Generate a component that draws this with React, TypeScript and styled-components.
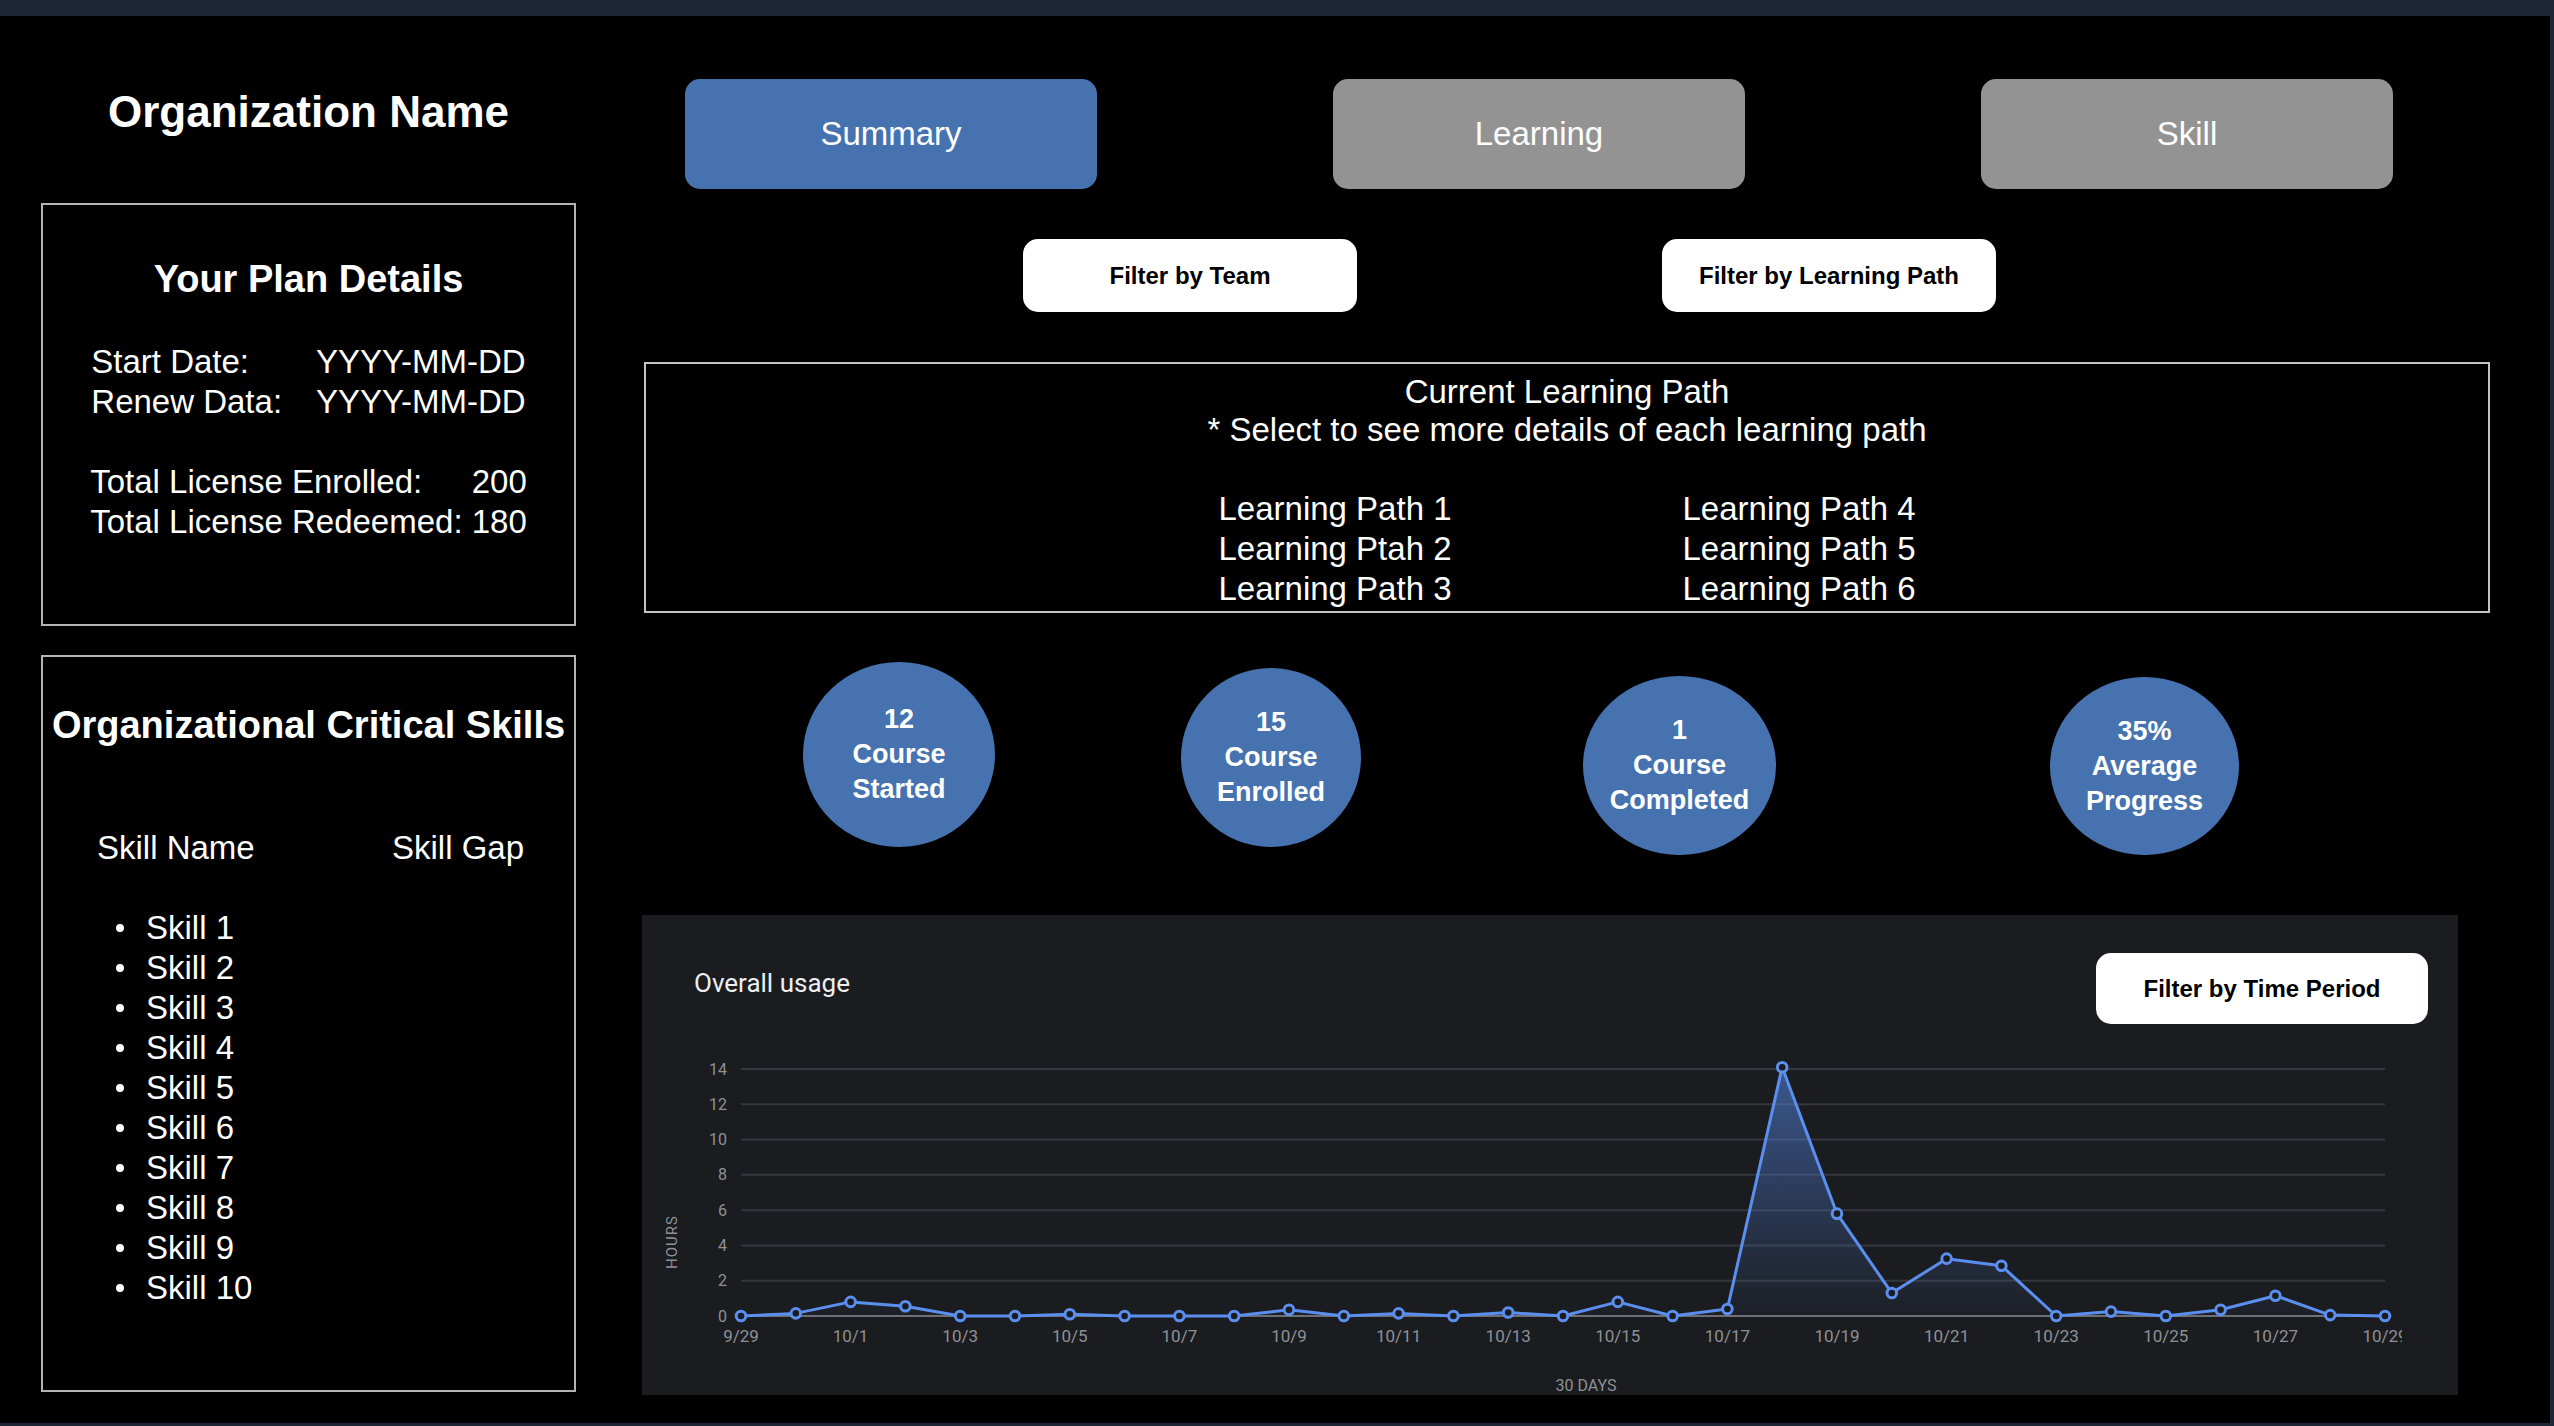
import React from "react";
import styled, { createGlobalStyle } from "styled-components";

const GlobalStyle = createGlobalStyle`
  html, body {
    margin: 0;
    padding: 0;
    background: #1e2638;
  }
  * { box-sizing: border-box; }
`;

const Frame = styled.div`
  margin: 16px 4px 0 0;
  height: 1407px;
  background: #000;
  display: flex;
  font-family: "Liberation Sans", Arial, Helvetica, sans-serif;
  color: #fff;
  overflow: hidden;
`;

const Sidebar = styled.aside`
  flex: none;
  width: 576px;
  padding-left: 41px;
  display: flex;
  flex-direction: column;
`;

const OrgTitle = styled.h1`
  margin: 71px 0 0;
  font-size: 44px;
  line-height: 50px;
  font-weight: 700;
  text-align: center;
`;

const Card = styled.section<{ $height: number; $top: number; $pad: number }>`
  margin-top: ${(p) => p.$top}px;
  height: ${(p) => p.$height}px;
  border: 2px solid #b4b4b4;
  padding-top: ${(p) => p.$pad}px;
  display: flex;
  flex-direction: column;
`;

const CardTitle = styled.h2`
  margin: 0;
  font-size: 38px;
  line-height: 44px;
  font-weight: 700;
  text-align: center;
  white-space: nowrap;
`;

const DateGrid = styled.div`
  margin: 41px auto 0;
  display: grid;
  grid-template-columns: auto auto;
  column-gap: 34px;
  font-size: 33px;
  line-height: 40px;
`;

const LicenseBlock = styled.div`
  margin: 40px auto 0;
  width: max-content;
  font-size: 33px;
  line-height: 40px;
`;

const LicenseRow = styled.div`
  display: flex;
  justify-content: space-between;
  gap: 9px;
`;

const SkillHead = styled.div`
  margin-top: 81px;
  padding-left: 54px;
  display: grid;
  grid-template-columns: 295px auto;
  font-size: 33px;
  line-height: 40px;
`;

const SkillList = styled.ul`
  list-style: none;
  margin: 40px 0 0;
  padding: 0 0 0 73px;
  font-size: 33px;
  line-height: 40px;
`;

const SkillItem = styled.li`
  display: flex;
  align-items: center;
  gap: 22px;
  &::before {
    content: "";
    width: 8px;
    height: 8px;
    border-radius: 50%;
    background: #fff;
    flex: none;
  }
`;

const Main = styled.main`
  flex: none;
  margin-left: 66px;
  width: 1870px;
  display: flex;
  flex-direction: column;
`;

const TabRow = styled.nav`
  margin-top: 63px;
  padding-left: 43px;
  display: flex;
  gap: 236px;
`;

const Tab = styled.button<{ $active?: boolean }>`
  width: 412px;
  height: 110px;
  border: none;
  border-radius: 15px;
  background: ${(p) => (p.$active ? "#4673b0" : "#939393")};
  color: #fff;
  font-family: inherit;
  font-size: 33px;
  display: flex;
  align-items: center;
  justify-content: center;
  padding: 0;
`;

const FilterRow = styled.div`
  margin-top: 50px;
  padding-left: 381px;
  display: flex;
  gap: 305px;
`;

const FilterButton = styled.button<{ $w?: number }>`
  width: ${(p) => p.$w ?? 334}px;
  height: ${(p) => (p.$w ? 71 : 73)}px;
  border: none;
  border-radius: 15px;
  background: #fff;
  color: #000;
  font-family: "Liberation Sans", Arial, sans-serif;
  font-weight: 700;
  font-size: 24px;
  padding: 0;
  display: flex;
  align-items: center;
  justify-content: center;
  flex: none;
`;

const PathBox = styled.section`
  margin: 50px 0 0 2px;
  width: 1846px;
  height: 251px;
  border: 2px solid #c4c4c4;
  padding-top: 9px;
  text-align: center;
  font-size: 33px;
`;

const PathHeader = styled.div`
  line-height: 38px;
`;

const PathGrid = styled.div`
  margin-top: 40px;
  display: grid;
  grid-template-columns: 233px 233px;
  column-gap: 231px;
  justify-content: center;
  text-align: left;
  line-height: 40px;
  white-space: nowrap;
`;

const StatRow = styled.div`
  margin-top: 49px;
  height: 193px;
  display: flex;
  align-items: flex-start;
`;

const Stat = styled.div<{ $w: number; $h: number; $left: number; $top: number }>`
  flex: none;
  width: ${(p) => p.$w}px;
  height: ${(p) => p.$h}px;
  margin-left: ${(p) => p.$left}px;
  margin-top: ${(p) => p.$top}px;
  border-radius: 50%;
  background: #4672b0;
  display: flex;
  flex-direction: column;
  align-items: center;
  justify-content: center;
  font-size: 27px;
  font-weight: 700;
  line-height: 35px;
  text-align: center;
`;

const ChartPanel = styled.section`
  margin-top: 60px;
  width: 1816px;
  height: 480px;
  background: #1b1c20;
  display: flex;
  flex-direction: column;
`;

const ChartHeader = styled.div`
  padding: 38px 30px 0 52px;
  display: flex;
  align-items: center;
  justify-content: space-between;
`;

const ChartTitle = styled.h3`
  margin: 0;
  font-family: Roboto, "Liberation Sans", sans-serif;
  font-weight: 400;
  font-size: 26px;
  color: #eceef0;
  transform: translateY(-6px);
`;

const ChartSvg = styled.svg`
  display: block;
  font-family: Roboto, "Liberation Sans", sans-serif;
`;

const data = [
  0, 0.15, 0.8, 0.55, 0, 0, 0.1, 0, 0, 0, 0.35, 0, 0.15, 0, 0.2, 0, 0.8, 0, 0.4,
  14.1, 5.8, 1.3, 3.25, 2.85, 0, 0.25, 0, 0.35, 1.15, 0.05, 0,
];

const X0 = 99;
const STEP = 54.8;
const Y0 = 292;
const UNIT = 247 / 14;

const xAt = (i: number) => X0 + i * STEP;
const yAt = (v: number) => Y0 - v * UNIT;

const dateLabel = (i: number) => (i === 0 ? "9/29" : `10/${i - 1}`);

function UsageChart() {
  const pts = data.map((v, i) => `${xAt(i).toFixed(1)},${yAt(v).toFixed(1)}`);
  const area = `${xAt(0)},${Y0} ${pts.join(" ")} ${xAt(30)},${Y0}`;
  return (
    <ChartSvg width={1816} height={371} viewBox="0 0 1816 371">
      <defs>
        <linearGradient id="areaFill" x1="0" y1="45" x2="0" y2="292" gradientUnits="userSpaceOnUse">
          <stop offset="0" stopColor="#4f7fd6" stopOpacity="0.6" />
          <stop offset="1" stopColor="#4f7fd6" stopOpacity="0.03" />
        </linearGradient>
        <clipPath id="labelClip">
          <rect x="0" y="0" width="1760" height="371" />
        </clipPath>
      </defs>
      {[2, 4, 6, 8, 10, 12, 14].map((v) => (
        <line key={v} x1={99} x2={1743} y1={yAt(v)} y2={yAt(v)} stroke="#36373c" strokeWidth={2} />
      ))}
      <line x1={99} x2={1743} y1={Y0} y2={Y0} stroke="#6e6f73" strokeWidth={2} />
      {[0, 2, 4, 6, 8, 10, 12, 14].map((v) => (
        <text key={v} x={85} y={yAt(v)} fill="#8e9196" fontSize={16} textAnchor="end" dominantBaseline="central">
          {v}
        </text>
      ))}
      <text
        x={30}
        y={218}
        fill="#8e9196"
        fontSize={15}
        letterSpacing={1}
        textAnchor="middle"
        dominantBaseline="central"
        transform="rotate(-90 30 218)"
      >
        HOURS
      </text>
      <polygon points={area} fill="url(#areaFill)" />
      <polyline points={pts.join(" ")} fill="none" stroke="#5b8fef" strokeWidth={3} strokeLinejoin="round" />
      {data.map((v, i) => (
        <circle key={i} cx={xAt(i)} cy={yAt(v)} r={4.8} fill="#1b1c20" stroke="#5b8fef" strokeWidth={3} />
      ))}
      <g clipPath="url(#labelClip)">
        {data.map((_, i) =>
          i % 2 === 0 ? (
            <text key={i} x={xAt(i)} y={312} fill="#8e9196" fontSize={17} textAnchor="middle" dominantBaseline="central">
              {dateLabel(i)}
            </text>
          ) : null
        )}
      </g>
      <text x={944} y={361} fill="#8e9196" fontSize={16} textAnchor="middle" dominantBaseline="central">
        30 DAYS
      </text>
    </ChartSvg>
  );
}

const skills = Array.from({ length: 10 }, (_, i) => `Skill ${i + 1}`);

const stats = [
  { w: 192, h: 185, left: 161, top: 0, lines: ["12", "Course", "Started"] },
  { w: 180, h: 179, left: 186, top: 6, lines: ["15", "Course", "Enrolled"] },
  { w: 193, h: 179, left: 222, top: 14, lines: ["1", "Course", "Completed"] },
  { w: 189, h: 178, left: 274, top: 15, lines: ["35%", "Average", "Progress"] },
];

export default function App() {
  return (
    <>
      <GlobalStyle />
      <Frame>
        <Sidebar>
          <OrgTitle>Organization Name</OrgTitle>
          <Card $top={66} $height={423} $pad={52}>
            <CardTitle>Your Plan Details</CardTitle>
            <DateGrid>
              <span>Start Date:</span>
              <span>YYYY-MM-DD</span>
              <span>Renew Data:</span>
              <span>YYYY-MM-DD</span>
            </DateGrid>
            <LicenseBlock>
              <LicenseRow>
                <span>Total License Enrolled:</span>
                <span>200</span>
              </LicenseRow>
              <LicenseRow>
                <span>Total License Redeemed: 180</span>
              </LicenseRow>
            </LicenseBlock>
          </Card>
          <Card $top={29} $height={737} $pad={46}>
            <CardTitle>Organizational Critical Skills</CardTitle>
            <SkillHead>
              <span>Skill Name</span>
              <span>Skill Gap</span>
            </SkillHead>
            <SkillList>
              {skills.map((s) => (
                <SkillItem key={s}>{s}</SkillItem>
              ))}
            </SkillList>
          </Card>
        </Sidebar>
        <Main>
          <TabRow>
            <Tab $active>Summary</Tab>
            <Tab>Learning</Tab>
            <Tab>Skill</Tab>
          </TabRow>
          <FilterRow>
            <FilterButton>Filter by Team</FilterButton>
            <FilterButton>Filter by Learning Path</FilterButton>
          </FilterRow>
          <PathBox>
            <PathHeader>Current Learning Path</PathHeader>
            <PathHeader>* Select to see more details of each learning path</PathHeader>
            <PathGrid>
              <span>Learning Path 1</span>
              <span>Learning Path 4</span>
              <span>Learning Ptah 2</span>
              <span>Learning Path 5</span>
              <span>Learning Path 3</span>
              <span>Learning Path 6</span>
            </PathGrid>
          </PathBox>
          <StatRow>
            {stats.map((s) => (
              <Stat key={s.lines[2]} $w={s.w} $h={s.h} $left={s.left} $top={s.top}>
                {s.lines.map((l) => (
                  <span key={l}>{l}</span>
                ))}
              </Stat>
            ))}
          </StatRow>
          <ChartPanel>
            <ChartHeader>
              <ChartTitle>Overall usage</ChartTitle>
              <FilterButton $w={332}>Filter by Time Period</FilterButton>
            </ChartHeader>
            <UsageChart />
          </ChartPanel>
        </Main>
      </Frame>
    </>
  );
}
